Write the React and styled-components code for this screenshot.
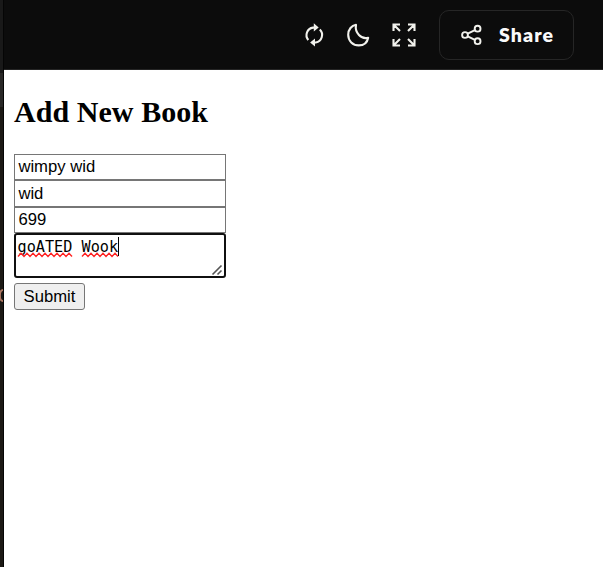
import React from "react";
import styled, { createGlobalStyle } from "styled-components";

const GlobalStyle = createGlobalStyle`
  * { box-sizing: border-box; }
  body { margin: 0; background: #fff; overflow: hidden; }
`;

const Shell = styled.div`
  display: flex;
  width: 603px;
  height: 567px;
`;

const Edge = styled.div`
  flex: 0 0 4px;
  border-right: 1px solid #050505;
  background: linear-gradient(#191919 73px, #292827 73px, #292827 107px, #1c1915 107px);
  padding-top: 286px;
  overflow: hidden;
`;

const EdgeMark = styled.svg`
  display: block;
`;

const Preview = styled.div`
  flex: 1;
  display: flex;
  flex-direction: column;
`;

const Toolbar = styled.header`
  display: flex;
  align-items: center;
  justify-content: flex-end;
  height: 70px;
  padding-right: 29px;
  background: #0c0c0c;
  border-bottom: 1px solid #252525;
`;

const ToolIcon = styled.svg`
  display: block;
  flex: none;
  width: 26px;
  height: 26px;
  margin-right: ${(p) => p.$gap}px;
  fill: none;
  stroke: #f2f2ed;
  stroke-width: 2.1;
`;

const ShareButton = styled.button`
  display: flex;
  align-items: center;
  width: 135px;
  height: 50px;
  padding: 0 0 0 19px;
  background: transparent;
  border: 1px solid #262626;
  border-radius: 10px;
  color: #fafafa;
  font: 800 19.5px/24px Lato, sans-serif;
`;

const ShareLabel = styled.span`
  letter-spacing: ${(p) => p.$tracking}px;
`;

const Page = styled.main`
  padding: 24px 10px 0;
`;

const Title = styled.h2`
  margin: 0 0 25px;
  font: bold 30px/35px "Liberation Serif", serif;
  letter-spacing: 0.06px;
  color: #000;
`;

const Form = styled.form`
  display: flex;
  flex-direction: column;
  align-items: flex-start;
`;

const Field = styled.input`
  display: block;
  width: 212px;
  height: ${(p) => p.$height}px;
  padding: 0 3.4px;
  border: 1px solid #767676;
  border-radius: 0;
  outline: none;
  font: 16.67px "Liberation Sans", sans-serif;
  color: #000;
`;

const Description = styled.div`
  position: relative;
  width: 212px;
  height: 45px;
  padding: 2px 1.5px;
  border: 2px solid #101010;
  border-radius: 3px;
  background: #fff;
  font: 15.2px/20px "DejaVu Sans Mono", monospace;
  color: #000;
  outline: none;
  white-space: pre;
`;

const Squiggles = styled.svg`
  position: absolute;
  left: 1px;
  top: 17px;
  fill: none;
  stroke: #f22;
  stroke-width: 1.4;
`;

const Caret = styled.i`
  position: absolute;
  left: 102px;
  top: 2px;
  width: 1px;
  height: 19px;
  background: #000;
`;

const Grip = styled.svg`
  position: absolute;
  right: 1px;
  bottom: 0;
  stroke: #555;
  stroke-width: 1.6;
`;

const Submit = styled.button`
  width: 71px;
  height: 27px;
  margin-top: 5px;
  padding: 0;
  border: 1px solid #767676;
  border-radius: 3px;
  background: #efefef;
  font: 16.67px "Liberation Sans", sans-serif;
  color: #000;
`;

const wave = (start, end) => {
  let d = `M${start} 4.5`;
  let up = true;
  for (let x = start + 3; x <= end; x += 3) {
    d += `L${x} ${up ? 1.2 : 4.5}`;
    up = !up;
  }
  return d;
};

export default function App() {
  return (
    <Shell>
      <GlobalStyle />
      <Edge>
        <EdgeMark width="3" height="18" stroke="#ad7662" strokeWidth="1.8" fill="none">
          <path d="M3 4Q0 4 0 9.5T3 15" />
        </EdgeMark>
      </Edge>
      <Preview>
        <Toolbar>
          <ToolIcon $gap={17} viewBox="0 0 26 26">
            <path d="M6.3 18A7.6 7.6 0 0 1 11 5.6H13.5M17.8 7.6A7.6 7.6 0 0 1 13.8 20.5H11.2" />
            <path d="M11.8 1.3 16.7 5.4 11.8 9.5ZM13 16.4 8.1 20.5 13 24.6Z" fill="#f2f2ed" stroke="none" />
          </ToolIcon>
          <ToolIcon $gap={20} viewBox="0 0 26 26">
            <path
              d="M11 2.8C6.7 3.5 3.2 7.2 3.2 12.8C3.2 19 7.8 23.4 13.8 23.4C18.8 23.4 22.3 20.3 23.2 15.7C16.2 17.6 9.6 11 11 2.8Z"
              strokeLinejoin="round"
            />
          </ToolIcon>
          <ToolIcon $gap={22} viewBox="0 0 26 26">
            <path d="M2.5 9V2.5H9M3 3 9 9M17 2.5H23.5V9M23 3 17 9M2.5 17V23.5H9M3 23 9 17M17 23.5H23.5V17M23 23 17 17" />
          </ToolIcon>
          <ShareButton type="button">
            <ToolIcon $gap={14} viewBox="0 0 26 26">
              <g strokeWidth="1.9">
                <circle cx="6" cy="13" r="2.9" />
                <circle cx="18.6" cy="6.7" r="2.9" />
                <circle cx="18.6" cy="19.2" r="2.9" />
                <path d="m8.7 11.7 7.2-3.6m-7.2 6.2 7.2 3.6" />
              </g>
            </ToolIcon>
            <ShareLabel $tracking={1.1}>Share</ShareLabel>
          </ShareButton>
        </Toolbar>
        <Page>
          <Title>Add New Book</Title>
          <Form>
            <Field $height={26} defaultValue="wimpy wid" />
            <Field $height={27} defaultValue="wid" />
            <Field $height={26} defaultValue="699" />
            <Description role="textbox" aria-multiline="true">
              goATED Wook
              <Squiggles width="106" height="6">
                <path d={wave(1, 56)} />
                <path d={wave(65, 102)} />
              </Squiggles>
              <Caret />
              <Grip width="12" height="12">
                <path d="M1.5 10.5 10.5 1.5M6.5 10.5 10.5 6.5" />
              </Grip>
            </Description>
            <Submit type="button">Submit</Submit>
          </Form>
        </Page>
      </Preview>
    </Shell>
  );
}
